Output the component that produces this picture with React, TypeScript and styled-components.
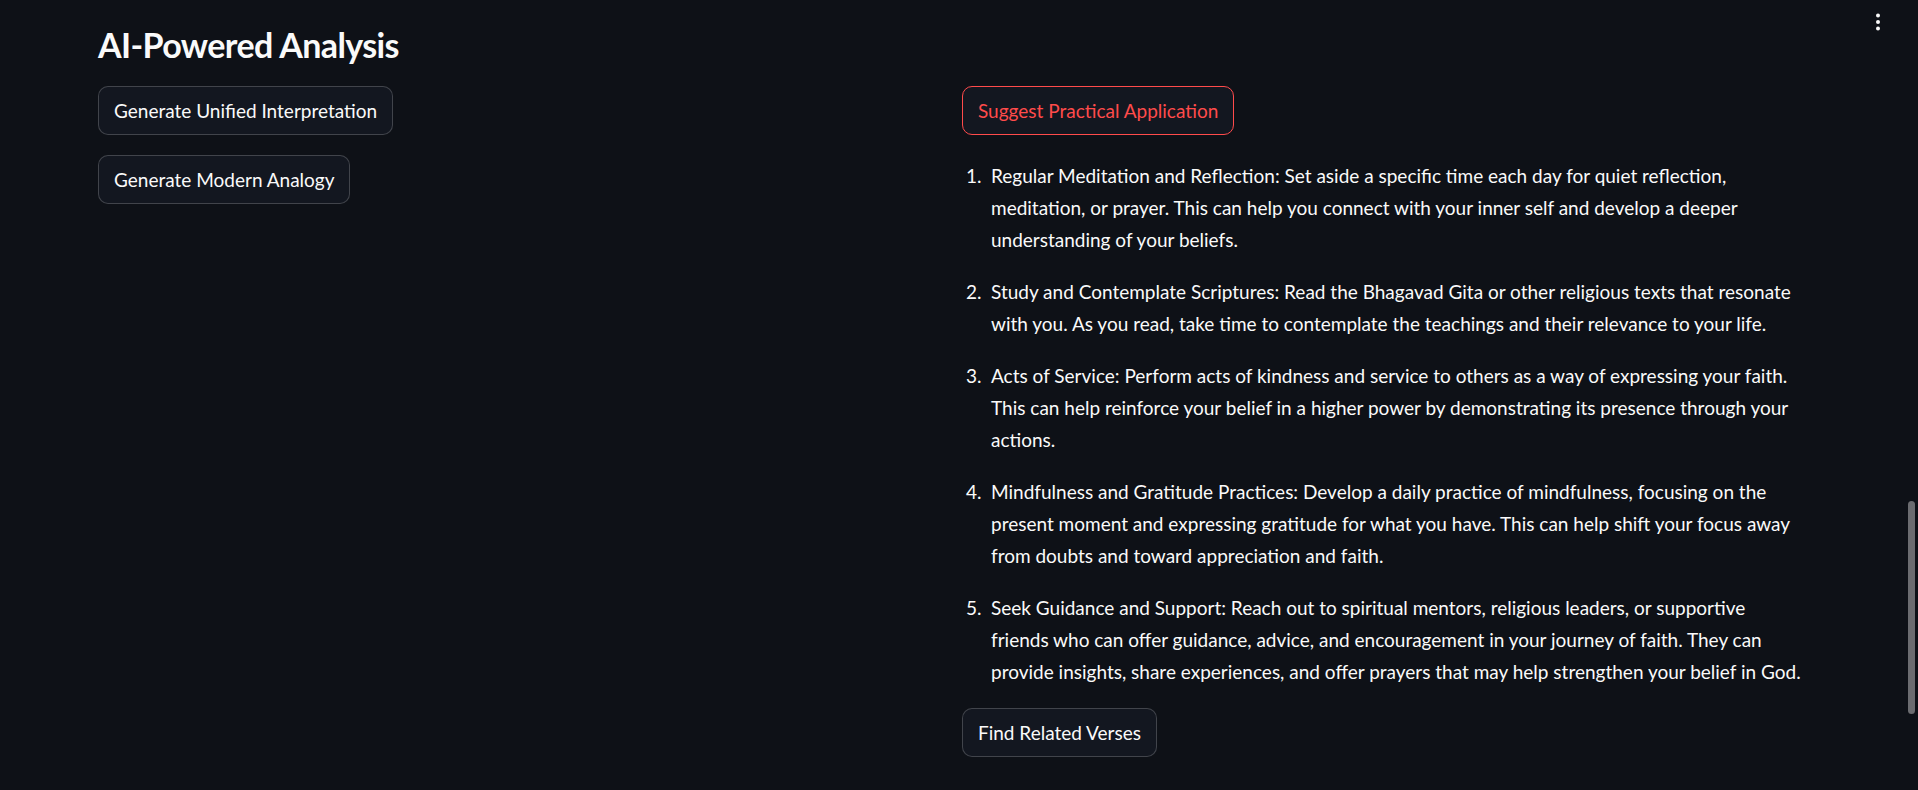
import React from "react";
import styled, { createGlobalStyle } from "styled-components";

const GlobalStyle = createGlobalStyle`
  html, body {
    margin: 0;
    padding: 0;
    background: #0e1117;
    color: #fafafa;
    font-family: Lato, "Noto Sans", sans-serif;
    overflow: hidden;
  }
  * { box-sizing: border-box; }
`;

const Page = styled.div`
  position: relative;
  width: 1918px;
  height: 790px;
  padding: 24px 112px 0 98px;
`;

const Title = styled.h3`
  margin: 0 0 20px;
  font-size: 34px;
  line-height: 42px;
  font-weight: 700;
  letter-spacing: -0.6px;
`;

const Columns = styled.div`
  display: grid;
  grid-template-columns: minmax(0, 1fr) minmax(0, 1fr);
  column-gap: 20px;
  align-items: start;
`;

const Column = styled.div`
  display: flex;
  flex-direction: column;
  align-items: flex-start;
  gap: 20px;
  min-width: 0;
`;

const Button = styled.button<{ $active?: boolean }>`
  height: 49px;
  padding: 0 15px;
  border-radius: 10px;
  border: 1px solid ${(p) => (p.$active ? "rgb(255, 75, 75)" : "rgba(250, 250, 250, 0.2)")};
  background: #131720;
  color: ${(p) => (p.$active ? "rgb(255, 75, 75)" : "#fafafa")};
  font-family: Lato, "Noto Sans", sans-serif;
  font-size: 19px;
  line-height: 32px;
  cursor: pointer;
  white-space: nowrap;
`;

const List = styled.ol`
  list-style: none;
  margin: 5px 0 0;
  padding: 0;
  display: flex;
  flex-direction: column;
  gap: 20px;
`;

const Item = styled.li`
  display: flex;
  font-size: 19px;
  line-height: 32px;
  white-space: nowrap;
`;

const Num = styled.span`
  width: 25px;
  flex: none;
  margin-left: 4px;
`;

const ItemText = styled.span`
  display: block;
`;

const MenuButton = styled.div`
  position: absolute;
  top: 10px;
  right: 32px;
  width: 16px;
  height: 24px;
  display: flex;
  align-items: center;
  justify-content: center;
`;

const ScrollThumb = styled.div`
  position: absolute;
  right: 3px;
  top: 501px;
  width: 7px;
  height: 213px;
  border-radius: 4px;
  background: #6b6c70;
`;

const items: string[][] = [
  [
    "Regular Meditation and Reflection: Set aside a specific time each day for quiet reflection,",
    "meditation, or prayer. This can help you connect with your inner self and develop a deeper",
    "understanding of your beliefs.",
  ],
  [
    "Study and Contemplate Scriptures: Read the Bhagavad Gita or other religious texts that resonate",
    "with you. As you read, take time to contemplate the teachings and their relevance to your life.",
  ],
  [
    "Acts of Service: Perform acts of kindness and service to others as a way of expressing your faith.",
    "This can help reinforce your belief in a higher power by demonstrating its presence through your",
    "actions.",
  ],
  [
    "Mindfulness and Gratitude Practices: Develop a daily practice of mindfulness, focusing on the",
    "present moment and expressing gratitude for what you have. This can help shift your focus away",
    "from doubts and toward appreciation and faith.",
  ],
  [
    "Seek Guidance and Support: Reach out to spiritual mentors, religious leaders, or supportive",
    "friends who can offer guidance, advice, and encouragement in your journey of faith. They can",
    "provide insights, share experiences, and offer prayers that may help strengthen your belief in God.",
  ],
];

export default function App() {
  return (
    <>
      <GlobalStyle />
      <Page>
        <Title>AI-Powered Analysis</Title>
        <Columns>
          <Column>
            <Button>Generate Unified Interpretation</Button>
            <Button>Generate Modern Analogy</Button>
          </Column>
          <Column>
            <Button $active>Suggest Practical Application</Button>
            <List>
              {items.map((lines, i) => (
                <Item key={i}>
                  <Num>{i + 1}.</Num>
                  <ItemText>
                    {lines.map((l, j) => (
                      <React.Fragment key={j}>
                        {l}
                        {j < lines.length - 1 && <br />}
                      </React.Fragment>
                    ))}
                  </ItemText>
                </Item>
              ))}
            </List>
            <Button>Find Related Verses</Button>
          </Column>
        </Columns>
        <MenuButton>
          <svg width="4" height="18" viewBox="0 0 4 18" fill="#fafafa">
            <circle cx="2" cy="2.5" r="2" />
            <circle cx="2" cy="9" r="2" />
            <circle cx="2" cy="15.5" r="2" />
          </svg>
        </MenuButton>
        <ScrollThumb />
      </Page>
    </>
  );
}
